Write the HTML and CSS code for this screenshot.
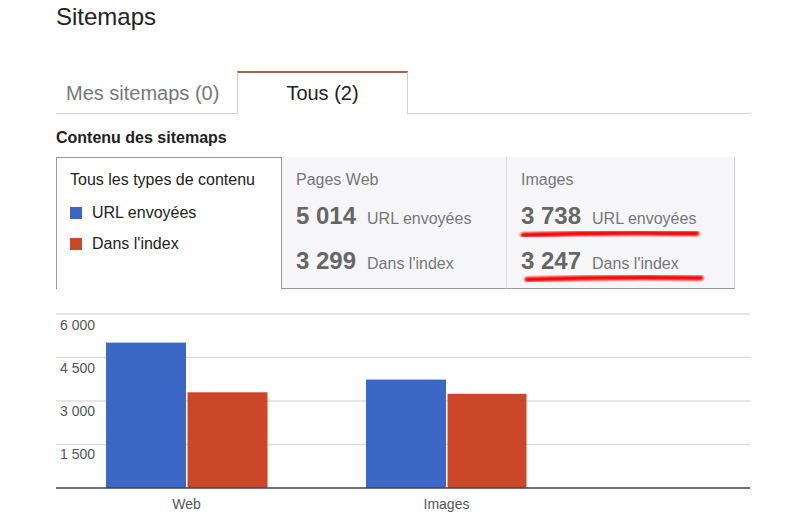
FILE: index.html
```html
<!DOCTYPE html>
<html lang="fr">
<head>
<meta charset="utf-8">
<title>Sitemaps</title>
<link rel="stylesheet" href="styles.css">
</head>
<body>
<div class="page">
  <h1 class="title">Sitemaps</h1>
  <div class="tabs">
    <div class="tab">Mes sitemaps (0)</div>
    <div class="tab tab-active">Tous (2)</div>
  </div>
  <h2 class="section">Contenu des sitemaps</h2>
  <div class="cards">
    <div class="card card-selected">
      <div class="card-title dark">Tous les types de contenu</div>
      <ul class="legend">
        <li><span class="swatch blue"></span>URL envoyées</li>
        <li><span class="swatch red"></span>Dans l'index</li>
      </ul>
    </div>
    <div class="card card-mid">
      <div class="card-title">Pages Web</div>
      <div class="stat"><span class="num">5 014</span><span class="lbl">URL envoyées</span></div>
      <div class="stat"><span class="num">3 299</span><span class="lbl">Dans l'index</span></div>
    </div>
    <div class="card card-last">
      <div class="card-title">Images</div>
      <div class="stat"><span class="num">3 738</span><span class="lbl">URL envoyées</span></div>
      <div class="stat"><span class="num">3 247</span><span class="lbl">Dans l'index</span></div>
      <svg class="marks" width="228" height="132" viewBox="0 0 228 132">
        <defs>
          <filter id="soft" x="-5%" y="-100%" width="110%" height="300%">
            <feGaussianBlur stdDeviation="0.8"/>
          </filter>
        </defs>
        <path d="M16 78 Q100 75 190 76.5" stroke="#f00" stroke-width="5" fill="none" stroke-linecap="round" filter="url(#soft)"/>
        <path d="M20 122.5 Q110 119.5 194 121" stroke="#f00" stroke-width="5" fill="none" stroke-linecap="round" filter="url(#soft)"/>
      </svg>
    </div>
  </div>
  <svg class="chart" width="694" height="225" viewBox="0 0 694 225">
    <g class="grid" stroke="#dcdcdc" stroke-width="1.5">
      <line x1="0" y1="14" x2="694" y2="14"/>
      <line x1="0" y1="57.5" x2="694" y2="57.5"/>
      <line x1="0" y1="101" x2="694" y2="101"/>
      <line x1="0" y1="144.5" x2="694" y2="144.5"/>
    </g>
    <rect x="50" y="42.6" width="80" height="145.4" fill="#3b67c6"/>
    <rect x="131.5" y="92.3" width="80" height="95.7" fill="#cc4628"/>
    <rect x="310" y="79.6" width="80" height="108.4" fill="#3b67c6"/>
    <rect x="391.5" y="93.8" width="79" height="94.2" fill="#cc4628"/>
    <line x1="0" y1="188" x2="694" y2="188" stroke="#444" stroke-width="1.5"/>
    <g class="ylabels">
      <text x="4" y="30">6 000</text>
      <text x="4" y="73">4 500</text>
      <text x="4" y="116">3 000</text>
      <text x="4" y="159">1 500</text>
    </g>
    <g class="xlabels">
      <text x="130.5" y="209">Web</text>
      <text x="390.5" y="209">Images</text>
    </g>
  </svg>
</div>
</body>
</html>
```
FILE: styles.css
```css
html, body {
  margin: 0;
  padding: 0;
  background: #fff;
}
body {
  font-family: "Liberation Sans", Arial, sans-serif;
  color: #222;
}
.page {
  width: 695px;
  margin-left: 56px;
}
.title {
  margin: 3px 0 0;
  font-size: 24px;
  line-height: 28px;
  font-weight: normal;
  color: #222;
}
.tabs {
  display: flex;
  margin-top: 40px;
  border-bottom: 1px solid #cfcfcf;
}
.tab {
  box-sizing: border-box;
  width: 181px;
  padding-left: 10px;
  border-top: 2px solid transparent;
  line-height: 40px;
  font-size: 20px;
  color: #777;
}
.tab-active {
  width: 171px;
  padding-left: 0;
  text-align: center;
  color: #222;
  background: #fff;
  border-top: 2px solid #a8644a;
  border-left: 1px solid #cfcfcf;
  border-right: 1px solid #cfcfcf;
  margin-bottom: -1px;
  padding-bottom: 1px;
}
.section {
  margin: 14px 0 9px;
  font-size: 16px;
  line-height: 20px;
  font-weight: bold;
  color: #222;
}
.cards {
  display: flex;
  height: 132px;
}
.card {
  box-sizing: border-box;
  height: 132px;
  padding: 13px 14px 0;
}
.card-selected {
  width: 226px;
  padding-top: 12px;
  padding-left: 13px;
  border: 1px solid #999;
  border-bottom: none;
  background: #fff;
}
.card-mid, .card-last {
  background: #f6f6f8;
  border-bottom: 1px solid #999;
}
.card-mid {
  width: 225px;
  border-right: 1px solid #dedee0;
}
.card-last {
  position: relative;
  width: 228px;
  border-right: 1px solid #cfcfcf;
}
.card-title {
  font-size: 16px;
  line-height: 20px;
  color: #777;
}
.card-title.dark {
  color: #222;
}
.legend {
  list-style: none;
  margin: 7px 0 0;
  padding: 0;
}
.legend li {
  display: flex;
  align-items: center;
  height: 31px;
  font-size: 16px;
  color: #222;
}
.swatch {
  width: 12px;
  height: 12px;
  margin-right: 10px;
  flex: none;
}
.swatch.blue { background: #3b67c6; }
.swatch.red { background: #cc4628; }
.stat {
  line-height: 42px;
  white-space: nowrap;
}
.card-title + .stat {
  margin-top: 5px;
}
.num {
  font-size: 24px;
  font-weight: bold;
  color: #666;
  margin-right: 11px;
}
.lbl {
  font-size: 16px;
  color: #777;
}
.marks {
  position: absolute;
  left: 0;
  top: 0;
  pointer-events: none;
}
.chart {
  display: block;
  margin-top: 11px;
  overflow: visible;
}
.ylabels text {
  font-family: "Liberation Sans", Arial, sans-serif;
  font-size: 14px;
  fill: #555;
}
.xlabels text {
  font-family: "Liberation Sans", Arial, sans-serif;
  font-size: 14px;
  fill: #555;
  text-anchor: middle;
}
```
